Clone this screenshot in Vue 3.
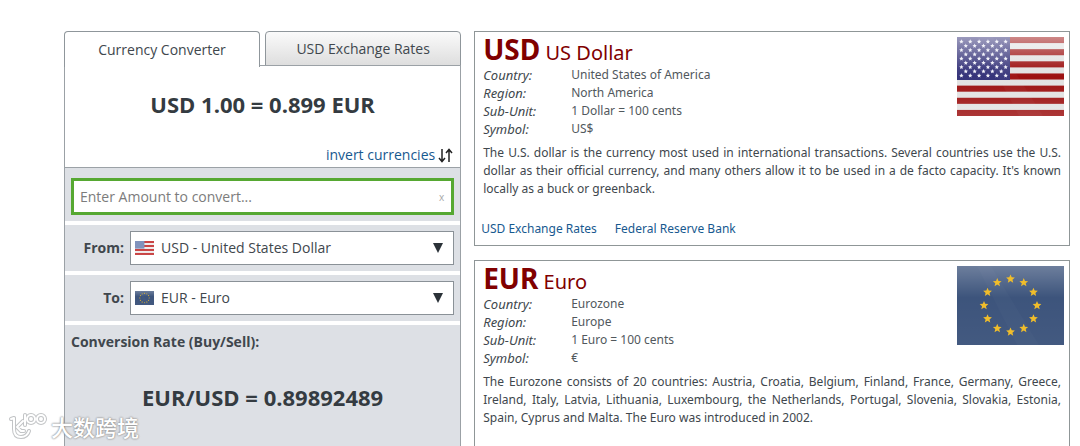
<template>
  <main class="page">
    <section class="converter">
      <div class="tabs">
        <button type="button" class="tab active">Currency Converter</button>
        <button type="button" class="tab">USD Exchange Rates</button>
      </div>

      <div class="panel">
        <div class="summary">
          <h1 class="rate">USD 1.00 = 0.899 EUR</h1>
          <a class="invert" href="#">
            invert currencies
            <svg width="15" height="15" viewBox="0 0 15 15" aria-hidden="true">
              <path d="M4 1V13M1 10L4 13.5L7 10M11 14V2M8 5L11 1.5L14 5" fill="none" stroke="#222" stroke-width="1.5" />
            </svg>
          </a>
        </div>

        <form class="form" @submit.prevent>
          <div class="row">
            <div class="amount">
              <input v-model="amount" type="text" placeholder="Enter Amount to convert..." aria-label="Enter Amount to convert..." />
              <button type="button" class="clear" @click="amount = ''">x</button>
            </div>
          </div>

          <div v-for="field in fields" :key="field.id" class="row">
            <label :for="field.id">{{ field.label }}</label>
            <div class="picker">
              <select :id="field.id">
                <option>{{ field.option }}</option>
              </select>
              <svg class="mini-flag" width="19" height="14" viewBox="0 0 107 79" preserveAspectRatio="none" aria-hidden="true">
                <use :href="field.flag" />
              </svg>
              <svg class="arrow" width="10" height="10" viewBox="0 0 10 10" aria-hidden="true">
                <path d="M0 0H10L5 10Z" fill="#2b3238" />
              </svg>
            </div>
          </div>

          <div class="result">
            <h2>Conversion Rate (Buy/Sell):</h2>
            <p class="rate">EUR/USD = 0.89892489</p>
          </div>
        </form>
      </div>
    </section>

    <div class="cards">
      <article v-for="item in currencies" :key="item.code" class="card">
        <div class="top">
          <div>
            <h2 class="name"><strong>{{ item.code }}</strong> {{ item.name }}</h2>
            <dl>
              <template v-for="fact in item.facts" :key="fact[0]">
                <dt>{{ fact[0] }}:</dt>
                <dd>{{ fact[1] }}</dd>
              </template>
            </dl>
          </div>
          <svg class="flag" width="107" height="79" viewBox="0 0 107 79" aria-hidden="true">
            <use :href="item.flag" />
          </svg>
        </div>
        <p class="description">{{ item.description }}</p>
        <nav v-if="item.links.length" class="links">
          <a v-for="link in item.links" :key="link" href="#">{{ link }}</a>
        </nav>
      </article>
    </div>

    <div class="watermark">
      <svg width="40" height="28" viewBox="0 0 40 28" aria-hidden="true">
        <g v-for="pen in pens" :key="pen.color" fill="none" :stroke="pen.color" :stroke-width="pen.width" stroke-linecap="round" stroke-linejoin="round">
          <path d="M3 6L6 5V16Q6 24 13 24Q19 24 21 18M15 8L9 14L13 18H16" />
          <path d="M17 2V12" />
          <circle cx="23" cy="6" r="4" />
          <circle cx="33" cy="6" r="4" />
        </g>
      </svg>
      <span>大数跨境</span>
    </div>

    <svg class="symbols" width="0" height="0" aria-hidden="true">
      <defs>
        <linearGradient id="gloss" x1="0" y1="0" x2="0" y2="1">
          <stop offset="0" stop-color="#fff" stop-opacity="0.5" />
          <stop offset="0.4" stop-color="#fff" stop-opacity="0.06" />
          <stop offset="0.5" stop-color="#fff" stop-opacity="0" />
          <stop offset="1" stop-color="#fff" stop-opacity="0.16" />
        </linearGradient>
        <linearGradient id="gloss-eu" x1="0" y1="0" x2="0" y2="1">
          <stop offset="0" stop-color="#fff" stop-opacity="0.27" />
          <stop offset="0.4" stop-color="#fff" stop-opacity="0.03" />
          <stop offset="1" stop-color="#fff" stop-opacity="0.06" />
        </linearGradient>
        <g id="flag-us">
          <rect width="107" height="79" fill="#e2e2e2" />
          <rect v-for="n in 7" :key="n" :y="(n - 1) * 12.154" width="107" height="6.077" fill="#9c1010" />
          <rect width="53" height="43" fill="#36347a" />
          <rect width="107" height="79" fill="url(#gloss)" />
          <path d="M20 0H36L86 79H62Z" fill="#fff" opacity="0.03" />
          <polygon v-for="(p, i) in usStars" :key="i" :points="p" fill="#f4f4fa" />
        </g>
        <g id="flag-eu">
          <rect width="107" height="79" fill="#374f78" />
          <rect width="107" height="79" fill="url(#gloss-eu)" />
          <path d="M20 0H34L82 79H60Z" fill="#fff" opacity="0.02" />
          <polygon v-for="(p, i) in euStars" :key="i" :points="p" fill="#f0bd2b" />
        </g>
        <g id="flag-us-small">
          <rect width="107" height="79" fill="#f0eeee" />
          <rect v-for="n in 4" :key="n" :y="(n - 1) * 22.5" width="107" height="11.3" fill="#c94444" />
          <rect width="53" height="43" fill="#8093bd" />
        </g>
      </defs>
    </svg>
  </main>
</template>

<script setup>
import { ref } from 'vue'

const amount = ref('')

const fields = [
  { id: 'from', label: 'From:', option: 'USD - United States Dollar', flag: '#flag-us-small' },
  { id: 'to', label: 'To:', option: 'EUR - Euro', flag: '#flag-eu' },
]

const currencies = [
  {
    code: 'USD',
    name: 'US Dollar',
    flag: '#flag-us',
    facts: [
      ['Country', 'United States of America'],
      ['Region', 'North America'],
      ['Sub-Unit', '1 Dollar = 100 cents'],
      ['Symbol', 'US$'],
    ],
    description:
      "The U.S. dollar is the currency most used in international transactions. Several countries use the U.S. dollar as their official currency, and many others allow it to be used in a de facto capacity. It's known locally as a buck or greenback.",
    links: ['USD Exchange Rates', 'Federal Reserve Bank'],
  },
  {
    code: 'EUR',
    name: 'Euro',
    flag: '#flag-eu',
    facts: [
      ['Country', 'Eurozone'],
      ['Region', 'Europe'],
      ['Sub-Unit', '1 Euro = 100 cents'],
      ['Symbol', '€'],
    ],
    description:
      'The Eurozone consists of 20 countries: Austria, Croatia, Belgium, Finland, France, Germany, Greece, Ireland, Italy, Latvia, Lithuania, Luxembourg, the Netherlands, Portugal, Slovenia, Slovakia, Estonia, Spain, Cyprus and Malta. The Euro was introduced in 2002.',
    links: [],
  },
]

const pens = [
  { color: '#c2c4c6', width: 4 },
  { color: '#fff', width: 2 },
]

// five-pointed star as polygon points
function star(cx, cy, r) {
  const points = []
  for (let i = 0; i < 10; i++) {
    const radius = i % 2 ? r * 0.45 : r
    const angle = (Math.PI / 5) * i - Math.PI / 2
    points.push(`${(cx + radius * Math.cos(angle)).toFixed(2)},${(cy + radius * Math.sin(angle)).toFixed(2)}`)
  }
  return points.join(' ')
}

const usStars = []
for (let row = 0; row < 9; row++) {
  const count = row % 2 ? 5 : 6
  for (let col = 0; col < count; col++) {
    usStars.push(star(4.4 + (row % 2 ? 4.4 : 0) + col * 8.85, 4.6 + row * 4.25, 2.3))
  }
}

const euStars = []
for (let i = 0; i < 12; i++) {
  const angle = (Math.PI / 6) * i
  euStars.push(star(53.5 + 26.5 * Math.cos(angle), 39.5 + 26.5 * Math.sin(angle), 4.6))
}
</script>

<style>
body {
  margin: 0;
  background: #fff;
}
</style>

<style scoped>
.page {
  position: relative;
  box-sizing: border-box;
  display: grid;
  grid-template-columns: 2fr 3fr;
  gap: 13px;
  min-height: 100vh;
  padding: 31px 10px 0 64px;
  font-family: 'Segoe UI', 'Open Sans', 'Noto Sans CJK SC', sans-serif;
  font-size: 14px;
  line-height: 18px;
  color: #40474d;
}

h1,
h2,
p,
dl,
dd {
  margin: 0;
}

a {
  color: #17598f;
  text-decoration: none;
}

button,
input,
select {
  font: inherit;
  color: inherit;
}

.converter {
  display: flex;
  flex-direction: column;
}

.tabs {
  display: flex;
  gap: 5px;
}

.tab {
  flex: 1;
  height: 35px;
  padding: 0;
  border: 1px solid #8f969b;
  border-radius: 4px 4px 0 0;
  background: linear-gradient(#fafafa, #dedede);
}

.tab.active {
  position: relative;
  margin-bottom: -1px;
  height: 36px;
  border-bottom: 0;
  background: #fff;
}

.panel {
  flex: 1;
  display: flex;
  flex-direction: column;
  margin-top: -1px;
  border: 1px solid #9ba1a6;
  border-bottom: 0;
}

.summary {
  display: flex;
  flex-direction: column;
  padding: 24px 7px 3px;
  border-bottom: 1px solid #9ba1a6;
}

.rate {
  font-size: 22px;
  font-weight: 700;
  line-height: 28px;
  text-align: center;
  color: #343b41;
}

.invert {
  display: flex;
  align-self: flex-end;
  align-items: center;
  gap: 3px;
  margin-top: 28px;
}

.form {
  flex: 1;
  display: flex;
  flex-direction: column;
  gap: 4px;
}

.row {
  display: flex;
  align-items: center;
  padding: 6px;
  background: #dde0e5;
}

.row:first-child {
  padding-top: 10px;
}

.row label {
  width: 53px;
  padding-right: 6px;
  font-weight: 700;
  text-align: right;
}

.amount {
  flex: 1;
  display: flex;
  border: 3px solid #56a832;
  background: #fff;
}

.amount input {
  flex: 1;
  min-width: 0;
  height: 31px;
  box-sizing: border-box;
  padding: 0 6px;
  border: 0;
  outline: 0;
  background: none;
}

.amount input::placeholder {
  color: #7c7c7c;
  opacity: 1;
}

.clear {
  padding: 0 7px;
  border: 0;
  background: none;
  font-size: 10px;
  color: #a8a8a8;
}

.picker {
  position: relative;
  flex: 1;
}

.picker select {
  display: block;
  appearance: none;
  width: 100%;
  height: 34px;
  padding: 0 30px;
  border: 1px solid #8a9197;
  border-radius: 0;
  background: #fff;
}

.mini-flag {
  position: absolute;
  top: 10px;
  left: 5px;
  pointer-events: none;
}

.arrow {
  position: absolute;
  top: 12px;
  right: 11px;
  pointer-events: none;
}

.result {
  flex: 1;
  padding: 8px 6px;
  background: #dde0e5;
}

.result h2 {
  font-size: 14px;
  font-weight: 700;
  line-height: 18px;
}

.result .rate {
  margin-top: 32px;
}

.cards {
  display: flex;
  flex-direction: column;
  gap: 14px;
  font-family: 'Segoe UI', 'Noto Sans', sans-serif;
  font-size: 12px;
}

.card {
  padding: 5px 8px;
  border: 1px solid #8f9697;
}

.card:last-child {
  flex: 1;
  border-bottom: 0;
}

.top {
  display: flex;
  justify-content: space-between;
}

.flag {
  margin-right: -3px;
}

.name {
  height: 29px;
  font-size: 20px;
  font-weight: 400;
  line-height: 24px;
  color: #800000;
}

.name strong {
  font-size: 28px;
}

dl {
  display: grid;
  grid-template-columns: 88px auto;
}

dt {
  font-size: 13px;
  font-style: italic;
}

dd {
  color: #51585d;
}

.description {
  margin-top: 6px;
  text-align: justify;
}

.links {
  display: flex;
  gap: 18px;
  margin: 22px -2px 2px;
}

.watermark {
  position: absolute;
  left: 8px;
  bottom: 5px;
  display: flex;
  align-items: center;
  gap: 3px;
  font-size: 22px;
  font-weight: 500;
  line-height: 28px;
  color: #fff;
  text-shadow: 0 0 2px #888, 0 0 2px #999;
}

.symbols {
  position: absolute;
}
</style>
